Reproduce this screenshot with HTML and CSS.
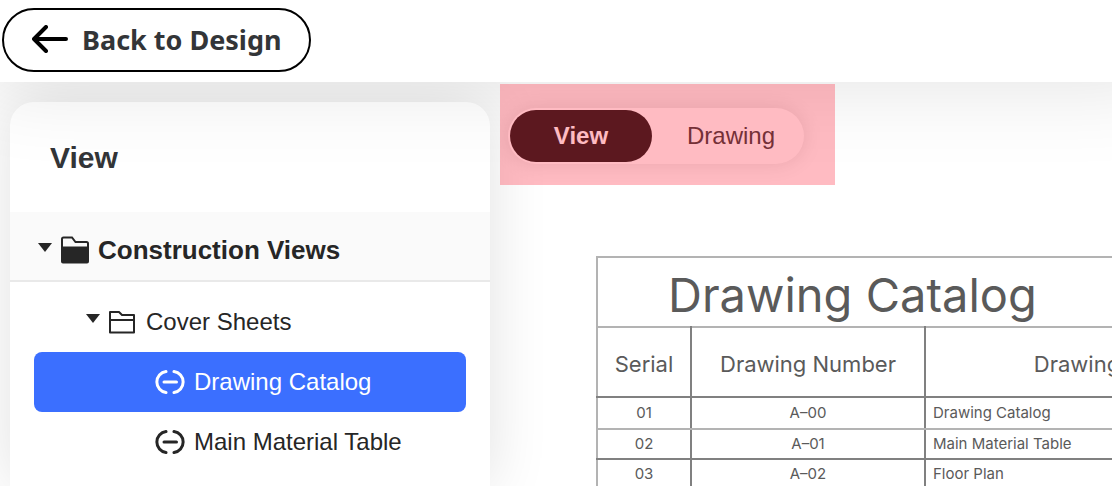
FILE: index.html
```
<!DOCTYPE html>
<html lang="en">
<head>
  <meta charset="UTF-8" />
  <meta name="viewport" content="width=device-width, initial-scale=1.0">
  <title>Drawing Catalog</title>
  <link rel="stylesheet" href="styles.css">
</head>
<body>
  <header>
    <button type="button" class="back">
      <svg width="36" height="28" viewBox="0 0 36 28" fill="none" stroke="currentColor" stroke-width="4" stroke-linecap="round" stroke-linejoin="round"><path d="M14 2 2 14l12 12M2 14h32"/></svg>
      Back to Design
    </button>
  </header>

  <main>
    <aside class="panel">
      <h2>View</h2>
      <nav>
        <button type="button" class="group" aria-expanded="true">
          <svg class="caret" width="14" height="16" viewBox="0 0 14 16"><path d="M0 1h14L7 10z"/></svg>
          <svg width="28" height="28" viewBox="0 0 28 28"><path d="M1 25.500V3Q1 1.500 2.500 1.500H11l3.500 4.500H25.500Q27 6 27 7.500V25.500Q27 26.500 26 26.500H2Q1 26.500 1 25.500z" fill="none" stroke="currentColor" stroke-width="2"/><path d="M1 10.500h26V26.500H1z"/></svg>
          Construction Views
        </button>
        <ul>
          <li>
            <button type="button" class="folder" aria-expanded="true">
              <svg class="caret" width="14" height="16" viewBox="0 0 14 16"><path d="M0 0h14L7 9z"/></svg>
              <svg width="28" height="28" viewBox="0 0 28 28"><path d="M1 24.500V4H10l3 3H25v17.500zM1 12h24" fill="none" stroke="currentColor" stroke-width="2" stroke-linejoin="round"/></svg>
              Cover Sheets
            </button>
          </li>
          <li>
            <a href="#catalog" class="leaf active">
              <svg width="30" height="24" viewBox="0 0 30 24" fill="none" stroke="currentColor" stroke-width="3" stroke-linecap="round"><path d="M11 1.500A10.600 10.600 0 0 0 11 22.500M19 1.500A10.600 10.600 0 0 1 19 22.500M9 12h12.500"/></svg>
              Drawing Catalog
            </a>
          </li>
          <li>
            <a href="#materials" class="leaf">
              <svg width="30" height="24" viewBox="0 0 30 24" fill="none" stroke="currentColor" stroke-width="3" stroke-linecap="round"><path d="M11 1.500A10.600 10.600 0 0 0 11 22.500M19 1.500A10.600 10.600 0 0 1 19 22.500M9 12h12.500"/></svg>
              Main Material Table
            </a>
          </li>
        </ul>
      </nav>
    </aside>

    <section class="canvas">
      <div class="highlight">
        <div class="toggle">
          <button type="button" class="on">View</button>
          <button type="button">Drawing</button>
        </div>
      </div>

      <table id="catalog">
        <colgroup>
          <col class="col-serial">
          <col class="col-number">
          <col class="col-name">
        </colgroup>
        <thead>
          <tr class="title"><th colspan="3">Drawing Catalog</th></tr>
          <tr class="heads"><th>Serial</th><th>Drawing Number</th><th>Drawing</th></tr>
        </thead>
        <tbody>
          <tr><td>01</td><td>A–00</td><td>Drawing Catalog</td></tr>
          <tr><td>02</td><td>A–01</td><td>Main Material Table</td></tr>
          <tr><td>03</td><td>A–02</td><td>Floor Plan</td></tr>
        </tbody>
      </table>
    </section>
  </main>
</body>
</html>
```
FILE: styles.css
```
:root {
  --text: #262626;
  --heading: #333538;
  --accent: #3b6fff;
  --ink: #5a5a5a;
  --line: #b3b3b3;
  --line-dark: #808080;
}
* {
  margin: 0;
  padding: 0;
  box-sizing: border-box;
}
body {
  display: flex;
  flex-direction: column;
  height: 100vh;
  overflow: hidden;
  font-family: "Liberation Sans", Arial, sans-serif;
  font-size: 24px;
  color: var(--text);
  background: #fff;
}
button {
  font: inherit;
  color: inherit;
  background: none;
  border: none;
  cursor: pointer;
}
svg {
  flex: none;
  fill: currentColor;
}
header {
  position: relative;
  z-index: 1;
  padding: 8px 2px 10px;
  background: #fff;
  box-shadow: 20px -40px 90px 40px rgba(0, 0, 0, 0.12);
}
.back {
  display: flex;
  align-items: center;
  gap: 14px;
  height: 64px;
  padding: 0 27px 2px 28px;
  border: 2px solid #000;
  border-radius: 32px;
  font-family: "Noto Sans", "Open Sans", sans-serif;
  font-size: 27px;
  font-weight: 700;
  color: var(--heading);
}
.back svg {
  color: #000;
  fill: none;
}
main {
  flex: 1;
  display: flex;
  gap: 10px;
  min-height: 0;
  padding-left: 10px;
}

/* side panel */
.panel {
  flex: none;
  width: 480px;
  margin-top: 20px;
  background: #fff;
  border-radius: 24px 24px 0 0;
  box-shadow: 0 0 60px rgba(0, 0, 0, 0.12);
}
.panel h2 {
  padding-left: 40px;
  font-size: 30px;
  line-height: 112px;
  height: 110px;
  color: var(--heading);
}
.panel ul {
  list-style: none;
  padding: 10px 24px;
}
.group, .folder, .leaf {
  display: flex;
  align-items: center;
  gap: 9px;
  width: 100%;
  height: 60px;
}
.group {
  height: 70px;
  padding: 8px 0 0 28px;
  font-size: 26px;
  font-weight: 700;
  background: #fafafa;
  border-bottom: 2px solid #e9e9e9;
}
.folder {
  padding-left: 52px;
}
.leaf {
  padding-left: 121px;
  color: inherit;
  text-decoration: none;
  border-radius: 8px;
}
.leaf svg {
  fill: none;
}
.leaf.active {
  color: #fff;
  background: var(--accent);
}

/* drawing area */
.canvas {
  flex: 1;
  min-width: 0;
  overflow: hidden;
}
.highlight {
  position: relative;
  width: fit-content;
  margin-top: 2px;
  padding: 24px 31px 21px 8px;
}
.highlight::after {
  content: "";
  position: absolute;
  inset: 0;
  z-index: 2;
  background: rgba(255, 45, 65, 0.32);
  pointer-events: none;
}
.toggle {
  position: relative;
  display: flex;
  padding: 2px;
  background: #fff;
  border-radius: 28px;
  box-shadow: 0 0 20px rgba(0, 0, 0, 0.12);
  z-index: 2;
}
.toggle button {
  width: 142px;
  height: 52px;
  border-radius: 26px;
  color: #333;
}
.toggle button:last-child {
  width: 150px;
  padding-left: 8px;
}
.toggle .on {
  font-weight: 700;
  color: #fff;
  background: #101010;
}
table {
  width: 634px;
  margin: 71px 0 0 96px;
  table-layout: fixed;
  border-collapse: collapse;
  border: 2px solid var(--line);
  font-family: Inter, sans-serif;
  color: var(--ink);
}
.col-serial {
  width: 94px;
}
.col-number {
  width: 234px;
}
th {
  font-weight: 400;
}
.title th {
  height: 70px;
  padding: 6px 0 0 70px;
  font-size: 47px;
  line-height: 60px;
  text-align: left;
}
.heads th {
  height: 70px;
  padding-top: 4px;
  font-size: 22px;
  border: 2px solid var(--line-dark);
  border-top-color: var(--line);
}
.heads th:first-child, td:first-child {
  border-left-color: var(--line);
}
td {
  height: 30px;
  font-size: 15px;
  line-height: 20px;
  text-align: center;
  border: 2px solid var(--line-dark);
}
tbody tr:first-child td {
  height: 32px;
  border-bottom-color: var(--line);
}
td:last-child {
  padding-left: 7px;
  text-align: left;
}
```
